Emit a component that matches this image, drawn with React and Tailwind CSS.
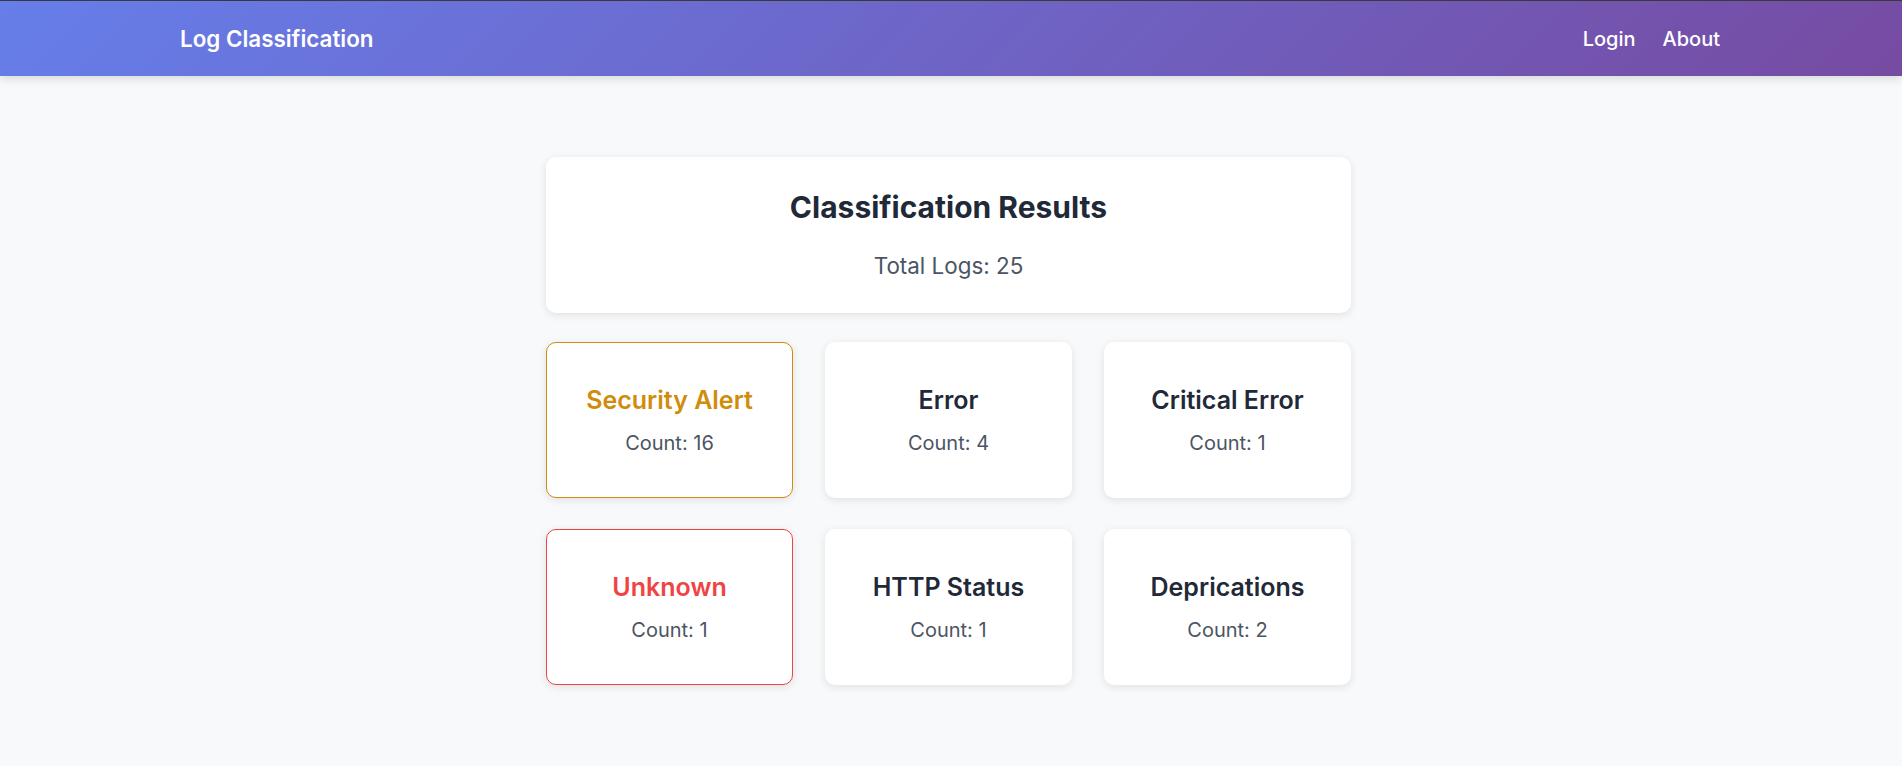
import React from 'react';

const categories = [
  { name: 'Security Alert', count: 16, tone: 'warn' },
  { name: 'Error', count: 4 },
  { name: 'Critical Error', count: 1 },
  { name: 'Unknown', count: 1, tone: 'danger' },
  { name: 'HTTP Status', count: 1 },
  { name: 'Deprications', count: 2 },
];

const CategoryCard = ({ name, count, tone }) => {
  // highlighted cards get a coloured border and title
  let border = 'border-transparent';
  let title = 'text-[#1f2937]';
  if (tone === 'warn') {
    border = 'border-[#d08c0a]';
    title = 'text-[#d08c0a]';
  } else if (tone === 'danger') {
    border = 'border-[#ef4444]';
    title = 'text-[#ef4444]';
  }

  return (
    <div
      className={`bg-white rounded-[10px] border ${border} shadow-[0_2px_8px_rgba(0,0,0,0.1)] pt-[42px] pb-[39px] text-center`}
    >
      <h3 className={`text-[25px] font-semibold leading-[30px] mb-[13px] ${title}`}>{name}</h3>
      <p className="text-[20px] leading-[30px] text-[#4b5563]">Count: {count}</p>
    </div>
  );
};

const App = () => {
  const total = categories.reduce((sum, c) => sum + c.count, 0);

  return (
    <div className="min-h-[766px] bg-[#f8f9fa] font-['Inter',sans-serif]">
      {/* Header */}
      <header className="h-[76px] border-t border-[#3a3a3a] bg-[linear-gradient(135deg,#667eea_0%,#764ba2_100%)] shadow-[0_2px_10px_rgba(0,0,0,0.15)] flex items-center justify-between pl-[180px] pr-[182px]">
        <div className="text-white text-[22.4px] font-semibold">Log Classification</div>
        <nav className="flex items-center gap-[27px] text-white text-[20px] font-medium">
          <a href="#">Login</a>
          <a href="#">About</a>
        </nav>
      </header>

      {/* Results */}
      <main className="flex justify-center pt-[81px] pb-[80px] pr-[5px]">
        <div className="w-[805px]">
          <div className="bg-white rounded-[10px] shadow-[0_2px_8px_rgba(0,0,0,0.1)] px-8 pt-8 pb-[30px] text-center mb-[29px]">
            <h2 className="text-3xl font-bold leading-[36px] text-[#1f2937] mb-[24px]">Classification Results</h2>
            <p className="text-[22.4px] leading-[33.6px] text-[#4b5563]">Total Logs: {total}</p>
          </div>

          <div className="grid grid-cols-3 gap-x-8 gap-y-[31px]">
            {categories.map((c) => (
              <CategoryCard key={c.name} {...c} />
            ))}
          </div>
        </div>
      </main>
    </div>
  );
};

export default App;
